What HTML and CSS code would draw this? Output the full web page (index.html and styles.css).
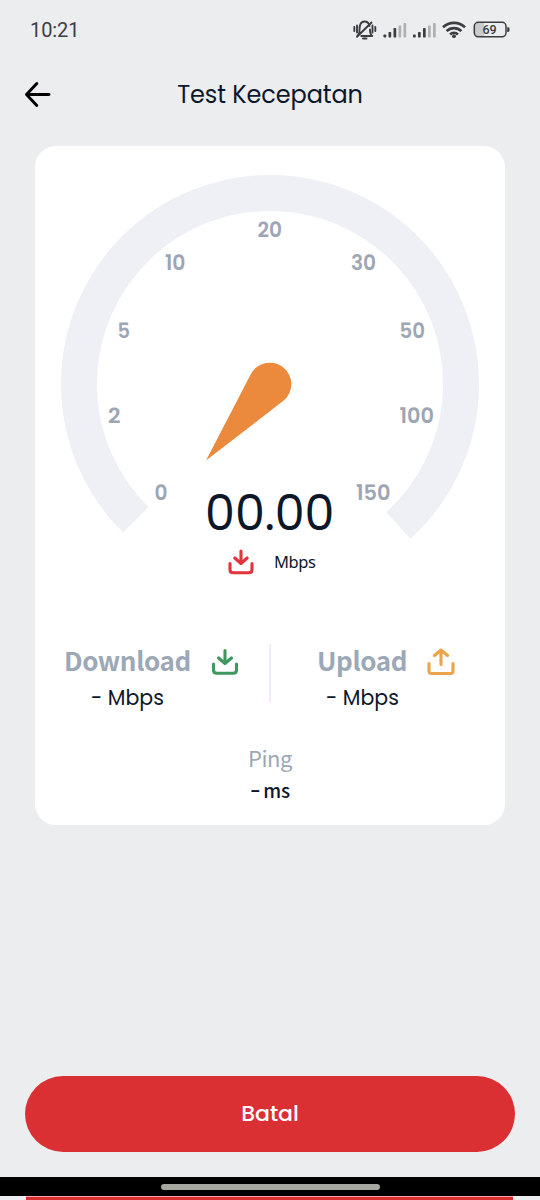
FILE: index.html
```
<!DOCTYPE html>
<html lang="id">
<head>
<meta charset="utf-8">
<title>Test Kecepatan</title>
<link rel="stylesheet" href="styles.css">
</head>
<body>
<div class="screen">
  <header class="status">
    <span class="clock">10:21</span>
    <svg class="status-icons" width="160" height="24" viewBox="352 18 160 24">
      <g fill="none" stroke="#3b3d40" stroke-width="1.9" stroke-linecap="round" stroke-linejoin="round">
        <path d="M357.500 35.500c2-1 2-3 2-6 0-5 2-8 5-8s4.500 2 5 4.500M370 29.500c0 3 0 5 2.300 6.500h-11M371.500 22.500L357 36.800M354.300 27v4M357 25.500v7M372.500 25.500v7M375.300 27v4M363 38.500h3.500"/>
      </g>
      <g fill="#3b3d40">
        <rect x="383.500" y="34.500" width="2.700" height="3" rx=".7"/><rect x="388.500" y="32" width="2.700" height="5.500" rx=".7"/><rect x="393.500" y="28" width="2.700" height="9.500" rx=".7"/>
        <rect x="413" y="34.500" width="2.700" height="3" rx=".7"/><rect x="418" y="32" width="2.700" height="5.500" rx=".7"/><rect x="423" y="28" width="2.700" height="9.500" rx=".7"/>
      </g>
      <g fill="#aeb0b2">
        <rect x="398.500" y="25.500" width="2.700" height="12" rx=".7"/><rect x="403.500" y="23" width="2.700" height="14.500" rx=".7"/>
        <rect x="428" y="25.500" width="2.700" height="12" rx=".7"/><rect x="433" y="23" width="2.700" height="14.500" rx=".7"/>
      </g>
      <g fill="none" stroke="#3b3d40" stroke-width="2.700">
        <path d="M443 27.300a15.700 15.700 0 0 1 22 0M446.600 31.100a10.500 10.500 0 0 1 14.800 0M450.100 34.500a5.600 5.600 0 0 1 7.800 0"/>
      </g>
      <circle cx="454" cy="36.200" r="1.900" fill="#3b3d40"/>
      <path d="M478 23h6v13h-6a3 3 0 0 1-3-3v-7a3 3 0 0 1 3-3z" fill="#c9cbcd"/>
      <rect x="474.300" y="22.300" width="31.700" height="14.500" rx="4" fill="none" stroke="#3b3d40" stroke-width="1.500"/>
      <path d="M507.200 27.300h1q1.300 0 1.300 1.300v2q0 1.300-1.300 1.300h-1z" fill="#3b3d40"/>
      <text class="battery-text" x="489.500" y="34" text-anchor="middle">69</text>
    </svg>
  </header>
  <nav class="topbar">
    <svg class="back" width="28" height="28" viewBox="24 80 28 28"><path d="M49 94.500H26.500M36.800 83.500L26.500 94.500l10.300 11" fill="none" stroke="#000" stroke-width="2.900" stroke-linecap="round" stroke-linejoin="round"/></svg>
    <h1 class="title">Test Kecepatan</h1>
  </nav>
  <main class="card">
    <svg class="gauge" width="470" height="400" viewBox="35 146 470 400">
      <path class="track" d="M135.700 519.800A191 191 0 1 1 398.300 525.500"/>
      <path class="needle" d="M206 460.500L250.900 374A21.500 21.500 0 1 1 283.100 401.100Z"/>
      <g class="scale">
        <text x="154.500" y="500" textLength="13" lengthAdjust="spacingAndGlyphs">0</text>
        <text x="108" y="423" textLength="12.500" lengthAdjust="spacingAndGlyphs">2</text>
        <text x="117.500" y="338" textLength="12.500" lengthAdjust="spacingAndGlyphs">5</text>
        <text x="165" y="270" textLength="20.500" lengthAdjust="spacingAndGlyphs">10</text>
        <text x="257.500" y="237" textLength="24.500" lengthAdjust="spacingAndGlyphs">20</text>
        <text x="351" y="270" textLength="25" lengthAdjust="spacingAndGlyphs">30</text>
        <text x="399.500" y="338" textLength="25.500" lengthAdjust="spacingAndGlyphs">50</text>
        <text x="399.500" y="423" textLength="34.500" lengthAdjust="spacingAndGlyphs">100</text>
        <text x="356" y="500" textLength="34.500" lengthAdjust="spacingAndGlyphs">150</text>
      </g>
      <text class="speed" x="205" y="529.500" textLength="129.500" lengthAdjust="spacingAndGlyphs">00.00</text>
    </svg>
    <div class="unit">
      <svg class="ico red" width="26" height="26" viewBox="0 0 26 26"><path d="M13 2v11.500M6.800 9L13 14.500 19.200 9M2 14.500v6.300q0 3 3 3h16q3 0 3-3v-6.300"/></svg>
      <span>Mbps</span>
    </div>
    <section class="results">
      <div class="result download">
        <div class="head"><b>Download</b>
          <svg class="ico green" width="28" height="28" viewBox="0 0 28 28"><path d="M14 2.500v12M7.500 10L14 15.500 20.500 10M2.500 16v6q0 3.300 3.300 3.300h16.400q3.300 0 3.300-3.300v-6"/></svg>
        </div>
        <p class="value">- Mbps</p>
      </div>
      <div class="result upload">
        <div class="head"><b>Upload</b>
          <svg class="ico amber" width="28" height="28" viewBox="0 0 28 28"><path d="M14 16.500V2.500M7.500 7.500L14 2l6.500 5.500M2 15.500v7.500q0 2.500 2.500 2.500h19q2.500 0 2.500-2.500v-7.500"/></svg>
        </div>
        <p class="value">- Mbps</p>
      </div>
    </section>
    <section class="ping">
      <h2>Ping</h2>
      <p><span class="dash">-</span> ms</p>
    </section>
  </main>
  <button class="cancel">Batal</button>
  <footer class="navbar"><span class="handle"></span></footer>
  <div class="edge"></div>
</div>
</body>
</html>
```
FILE: styles.css
```
* { box-sizing: border-box; margin: 0; padding: 0; }
body { background: #ebedef; font-family: Poppins, Inter, sans-serif; color: #0d172a; }
.screen { width: 540px; height: 1200px; display: flex; flex-direction: column; overflow: hidden; }
.status { height: 60px; padding: 18px 28px 0 30px; display: flex; justify-content: space-between; align-items: flex-start; }
.clock { font: 400 20px/25px Roboto, sans-serif; color: #3c3e41; letter-spacing: -.1px; }
.battery-text { font: 500 12.500px Roboto, sans-serif; fill: #3b3d40; }
.topbar { height: 86px; padding: 20px 24px 0; display: grid; grid-template-columns: 28px 1fr 28px; align-items: start; }
.title { font-size: 24px; line-height: 29px; font-weight: 400; text-align: center; letter-spacing: -.1px; }
.card { width: 470px; height: 679px; margin: 0 35px; background: #fff; border-radius: 21px; flex: none; }
.gauge { display: block; }
.track { fill: none; stroke: #eff0f5; stroke-width: 36; }
.needle { fill: #eb8a3d; }
.scale { font-size: 21px; font-weight: 600; fill: #9ca6b4; }
.speed { font-size: 48px; font-weight: 400; fill: #0d172a; }
.unit { height: 32px; padding-left: 193px; display: flex; align-items: center; gap: 20px; font: 400 16.500px/24px "Noto Sans", sans-serif; letter-spacing: -.4px; }
.ico { flex: none; fill: none; stroke-width: 3.1; stroke-linecap: round; stroke-linejoin: round; }
.red { stroke: #e1343c; }
.green { stroke: #3f9860; }
.amber { stroke: #eba44b; }
.results { margin-top: 66px; height: 58px; display: grid; grid-template-columns: 236px 234px; grid-template-rows: 58px; }
.download { border-right: 2px solid #f8e8fb; padding-left: 29px; }
.upload { padding-left: 46px; }
.head { height: 36px; display: flex; align-items: center; gap: 20px; }
.head b { font: 700 26px/32px "Noto Sans CJK SC", "Noto Sans", sans-serif; letter-spacing: -.4px; padding-bottom: 4px; color: #9da8b7; }
.value { font-size: 20.500px; line-height: 35px; padding-left: 27px; }
.upload .value { padding-left: 9px; }
.ping { margin-top: 38px; text-align: center; }
.ping h2 { font: 400 22px/34px "Noto Sans CJK SC", "Noto Sans", sans-serif; letter-spacing: -.5px; color: #9da8b7; }
.ping p { font: 500 19px/30px "Noto Sans CJK SC", "Noto Sans", sans-serif; padding-top: 1px; }
.dash { font-family: Poppins, sans-serif; margin-right: -2px; }
.cancel { margin: 251px 25px 0; width: 490px; height: 76px; border: 0; border-radius: 38px; background: #da2f33; color: #fff; font: 500 22px/76px Poppins, Inter, sans-serif; flex: none; }
.navbar { margin-top: 25px; height: 19px; flex: none; background: #000; padding-top: 7px; }
.handle { display: block; width: 219px; height: 6px; margin: 0 auto; border-radius: 3px; background: #a6a79f; }
.edge { height: 4px; margin: 0 27px 0 26px; background: #da2f33; flex: none; border-top: 1px solid #f5a5a7; }
```
